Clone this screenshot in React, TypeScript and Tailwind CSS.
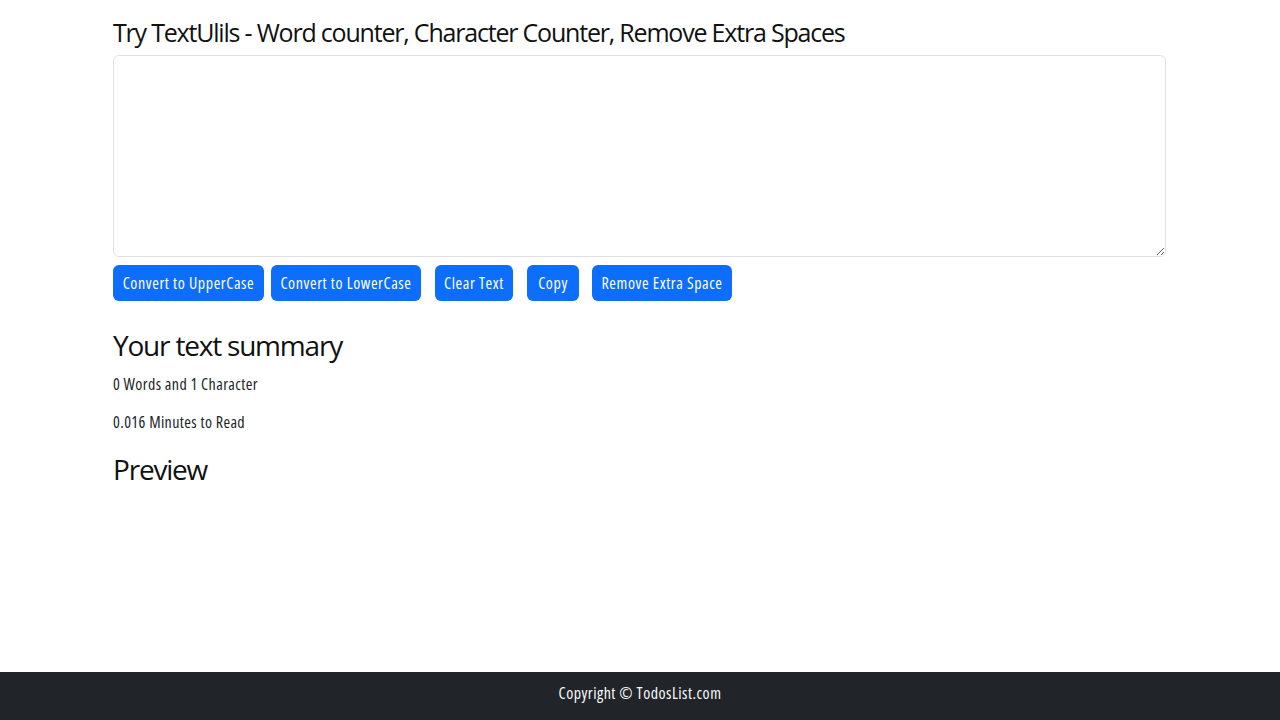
import React from "react";

const FONT = "font-['Open_Sans','Noto_Sans',sans-serif]";

function Btn({ label, w, ml }: { label: string; w: string; ml: string }) {
  return (
    <button
      className={`h-[36px] ${w} ${ml} shrink-0 whitespace-nowrap rounded-[6px] bg-[#0d6efd] text-white text-[16px] font-stretch-[75%] tracking-[0.6px] leading-[24px] flex items-center justify-center`}
    >
      {label}
    </button>
  );
}

export default function App() {
  return (
    <div className={`min-h-screen flex flex-col bg-white text-[#212529] ${FONT}`}>
      <main className="w-[1053px] ml-[113px] pt-[14px]">
        <h2 className="text-[25px] leading-[36px] font-medium tracking-[-1.2px] text-[#111] mb-[5px]">
          Try TextUlils - Word counter, Character Counter, Remove Extra Spaces
        </h2>
        <textarea
          className="block w-full h-[202px] border border-[#dee2e6] rounded-[6px] resize-y px-3 py-2 outline-none"
          defaultValue=""
        />
        <div className="flex mt-[8px]">
          <Btn label="Convert to UpperCase" w="w-[151px]" ml="ml-0" />
          <Btn label="Convert to LowerCase" w="w-[150px]" ml="ml-[7px]" />
          <Btn label="Clear Text" w="w-[78px]" ml="ml-[14px]" />
          <Btn label="Copy" w="w-[52px]" ml="ml-[14px]" />
          <Btn label="Remove Extra Space" w="w-[140px]" ml="ml-[13px]" />
        </div>
        <h2 className="text-[28px] leading-[40px] font-medium tracking-[-1.2px] text-[#111] mt-[24px] mb-[7px]">
          Your text summary
        </h2>
        <p className="text-[16px] leading-[24px] font-stretch-[75%] tracking-[0.4px] mb-[14px]">0 Words and 1 Character</p>
        <p className="text-[16px] leading-[24px] font-stretch-[75%] tracking-[0.4px] mb-[15px]">0.016 Minutes to Read</p>
        <h2 className="text-[28px] leading-[40px] font-medium tracking-[-1.2px] text-[#111]">Preview</h2>
      </main>
      <footer className="mt-auto h-[48px] bg-[#212529] flex justify-center pt-[9px] text-[#f8f9fa] text-[16px] leading-[24px] font-stretch-[75%] tracking-[0.5px]">
        Copyright © TodosList.com
      </footer>
    </div>
  );
}
